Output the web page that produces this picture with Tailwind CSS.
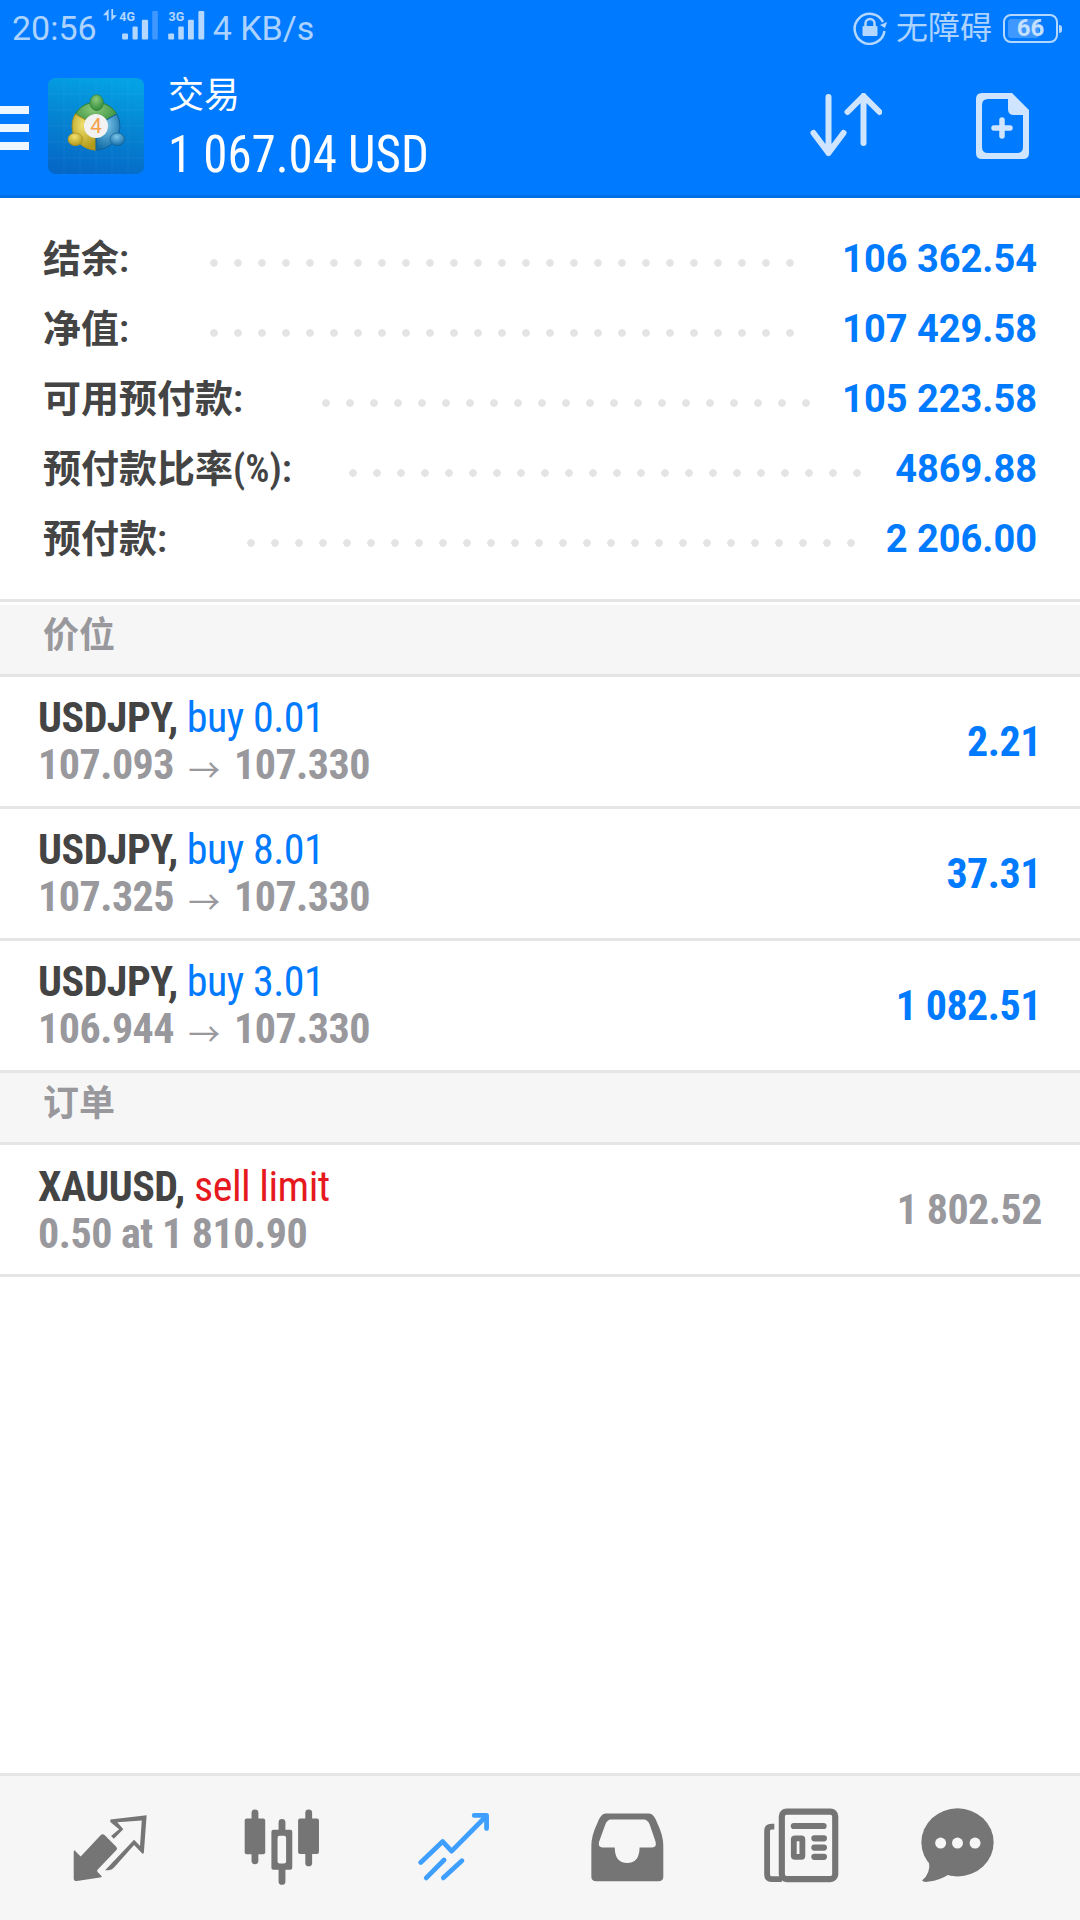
<!DOCTYPE html>
<html lang="en">
<head>
    <meta charset="UTF-8">
    <meta name="viewport" content="width=device-width, initial-scale=1.0">
    <title>交易</title>
    <script src="https://cdn.jsdelivr.net/npm/@tailwindcss/browser@4"></script>
</head>
<body class="bg-white w-[1080px] h-[1920px] overflow-hidden flex flex-col font-['Roboto','Noto_Sans_CJK_SC',sans-serif]">
    <!-- status bar -->
    <div class="h-[60px] pb-[4px] bg-[#007aff] flex items-center text-[#acd2ff] relative">
        <span class="ml-[12px] text-[34px] leading-none">20:56</span>
        <svg class="ml-[5px] w-[104px] h-[48px]" viewBox="297 20 300 138" fill="#b4d7ff">
            <path d="M300 52L316 34V68H311V52ZM340 52L324 68V34H329V52Z"/>
            <text x="347" y="70" font-size="36" font-weight="700" font-family="Roboto">4G</text>
            <rect x="355" y="105" width="17" height="17" rx="3"/><rect x="385" y="85" width="15" height="37" rx="3"/><rect x="412" y="65" width="18" height="57" rx="3"/><rect x="442" y="40" width="16" height="82" rx="3" fill="#3f98ff"/>
            <text x="489" y="68" font-size="36" font-weight="700" font-family="Roboto">3G</text>
            <rect x="488" y="105" width="17" height="17" rx="3"/><rect x="517" y="85" width="16" height="37" rx="3"/><rect x="545" y="65" width="17" height="57" rx="3"/><rect x="575" y="40" width="17" height="82" rx="3"/>
        </svg>
        <span class="ml-[7px] text-[34px] leading-none">4 KB/s</span>
        <svg class="ml-auto w-[34px] h-[34px]" viewBox="0 0 34 34" fill="none">
            <path d="M30 11A15 15 0 1 0 31.500 20" stroke="#b4d7ff" stroke-width="2.500"/>
            <path d="M27 14l5 3 2-6z" fill="#b4d7ff"/>
            <rect x="9.500" y="15" width="15" height="10" rx="1" fill="#b4d7ff"/>
            <path d="M12.500 15v-2.500a4.500 4.500 0 0 1 9 0V15" stroke="#b4d7ff" stroke-width="2.500"/>
        </svg>
        <span class="ml-[9px] text-[32px] leading-none">无障碍</span>
        <div class="ml-[11px] mr-[22px] w-[55px] h-[29px] border-2 border-[#b4d7ff] rounded-[8px] relative flex items-center justify-center p-[3px]">
            <div class="absolute left-[3px] top-[3px] bottom-[3px] w-[31px] bg-[#3f98ff] rounded-[3px]"></div>
            <span class="relative text-[24px] font-bold leading-none text-[#c4e0ff]">66</span>
            <div class="absolute right-[-6px] top-[9px] w-[3px] h-[8px] bg-[#b4d7ff] rounded-r-sm"></div>
        </div>
    </div>

    <!-- toolbar -->
    <div class="h-[138px] bg-[#007aff] border-b-[3px] border-[#006fe6] flex items-start">
        <div class="mt-[46px] w-[29px] flex flex-col gap-[10px]">
            <div class="h-[8px] bg-[#eef6ff]"></div>
            <div class="h-[8px] bg-[#eef6ff]"></div>
            <div class="h-[8px] bg-[#eef6ff]"></div>
        </div>
        <svg class="ml-[19px] mt-[18px] w-[96px] h-[96px] shrink-0" viewBox="54 54 288 288">
            <defs>
                <linearGradient id="bg" x1="0.600" y1="0" x2="0.400" y2="1"><stop offset="0" stop-color="#04a2e4"/><stop offset="0.500" stop-color="#0583d2"/><stop offset="1" stop-color="#0568c6"/></linearGradient>
                <radialGradient id="gr" cx="0.450" cy="0.300" r="0.700"><stop offset="0" stop-color="#8cc97a"/><stop offset="1" stop-color="#2f8a3a"/></radialGradient>
                <radialGradient id="ye" cx="0.450" cy="0.300" r="0.700"><stop offset="0" stop-color="#f0e070"/><stop offset="1" stop-color="#b29a18"/></radialGradient>
                <radialGradient id="bl" cx="0.450" cy="0.300" r="0.700"><stop offset="0" stop-color="#7cc4e8"/><stop offset="1" stop-color="#136fa8"/></radialGradient>
            </defs>
            <rect x="54" y="54" width="288" height="288" rx="22" fill="url(#bg)"/>
            <path d="M102 54v288M150 54v288M198 54v288M246 54v288M294 54v288M54 102h288M54 150h288M54 198h288M54 246h288M54 294h288" stroke="#ffffff" stroke-opacity="0.080" stroke-width="2"/>
            <path d="M198 198L136 162A72 72 0 0 1 260 162Z" fill="url(#gr)" stroke="#2f7f38" stroke-width="3"/>
            <path d="M198 198L136 162A72 72 0 0 0 198 270Z" fill="url(#ye)" stroke="#a8901a" stroke-width="3"/>
            <path d="M198 198L260 162A72 72 0 0 1 198 270Z" fill="url(#bl)" stroke="#0f5f9a" stroke-width="3"/>
            <ellipse cx="200" cy="128" rx="20" ry="24" fill="url(#gr)" stroke="#2f7f38" stroke-width="2"/>
            <ellipse cx="136" cy="238" rx="22" ry="19" fill="url(#ye)" stroke="#a8901a" stroke-width="2"/>
            <ellipse cx="262" cy="238" rx="22" ry="19" fill="url(#bl)" stroke="#135f90" stroke-width="2"/>
            <circle cx="198" cy="198" r="36" fill="#f2f2f2"/>
            <text x="198" y="220" font-size="62" text-anchor="middle" font-family="Roboto" fill="#f5a04a">4</text>
        </svg>
        <div class="ml-[24px] flex flex-col text-white">
            <span class="mt-[14px] text-[36px] leading-[44px]">交易</span>
            <span class="mt-[8px] text-[52px] leading-[58px] [font-stretch:75%] origin-left scale-x-[0.94] whitespace-nowrap">1 067.04 USD</span>
        </div>
        <svg class="ml-auto mt-[33px] w-[73px] h-[66px]" viewBox="0 0 72 66" fill="none" stroke="#cfe5ff" stroke-width="6" stroke-linecap="round" stroke-linejoin="round">
            <path d="M19 4V60M4 40L19 60L34 40"/>
            <path d="M54 3V50M38 19L54 3L70 19"/>
        </svg>
        <svg class="ml-[93px] mr-[50px] mt-[33px] w-[55px] h-[66px]" viewBox="0 0 53 66">
            <path fill-rule="evenodd" fill="#cfe5ff" d="M6 0H36L53 17V60Q53 66 47 66H6Q0 66 0 60V6Q0 0 6 0ZM12 6Q6 6 6 12V54Q6 60 12 60H41Q47 60 47 54V22H38Q32 22 32 16V6Z"/>
            <path d="M26 27V43M18 35H34" stroke="#cfe5ff" stroke-width="5.500" stroke-linecap="round"/>
        </svg>
    </div>

    <!-- account summary -->
    <div class="pt-[26px] pb-[25px] pl-[43px] pr-[43px] text-[38px] leading-[70px]">
        <div class="flex items-center h-[70px]">
            <span class="w-[159px] font-semibold text-[#444444] whitespace-nowrap">结余:</span>
            <div class="w-[600px] h-[24px] mt-[8px] bg-[radial-gradient(circle,#e4e4e4_3.5px,transparent_4px)] bg-[length:24px_24px]"></div>
            <span class="ml-auto font-bold text-[#007aff]">106 362.54</span>
        </div>
        <div class="flex items-center h-[70px]">
            <span class="w-[159px] font-semibold text-[#444444] whitespace-nowrap">净值:</span>
            <div class="w-[600px] h-[24px] mt-[8px] bg-[radial-gradient(circle,#e4e4e4_3.5px,transparent_4px)] bg-[length:24px_24px]"></div>
            <span class="ml-auto font-bold text-[#007aff]">107 429.58</span>
        </div>
        <div class="flex items-center h-[70px]">
            <span class="w-[271px] font-semibold text-[#444444] whitespace-nowrap">可用预付款:</span>
            <div class="w-[504px] h-[24px] mt-[8px] bg-[radial-gradient(circle,#e4e4e4_3.5px,transparent_4px)] bg-[length:24px_24px]"></div>
            <span class="ml-auto font-bold text-[#007aff]">105 223.58</span>
        </div>
        <div class="flex items-center h-[70px]">
            <span class="w-[298px] font-semibold text-[#444444] whitespace-nowrap">预付款比率<span class="[font-stretch:75%]">(%):</span></span>
            <div class="w-[528px] h-[24px] mt-[8px] bg-[radial-gradient(circle,#e4e4e4_3.5px,transparent_4px)] bg-[length:24px_24px]"></div>
            <span class="ml-auto font-bold text-[#007aff]">4869.88</span>
        </div>
        <div class="flex items-center h-[70px]">
            <span class="w-[196px] font-semibold text-[#444444] whitespace-nowrap">预付款:</span>
            <div class="w-[624px] h-[24px] mt-[8px] bg-[radial-gradient(circle,#e4e4e4_3.5px,transparent_4px)] bg-[length:24px_24px]"></div>
            <span class="ml-auto font-bold text-[#007aff]">2 206.00</span>
        </div>
    </div>

    <!-- positions -->
    <div class="h-[3px] bg-[#e5e5e5]"></div>
    <div class="h-[3px]"></div>
    <div class="h-[72px] bg-[#f6f6f6] border-b-[3px] border-[#e5e5e5] pl-[43px] text-[36px] leading-[62px] font-semibold text-[#98989d]">价位</div>

    <div class="h-[132px] border-b-[3px] border-[#e5e5e5] pl-[38px] pr-[39px] flex items-center justify-between [font-stretch:75%] tracking-[-0.5px]">
        <div class="mt-[3px] whitespace-nowrap">
            <div class="text-[42px] leading-[47px] font-bold text-[#444444]">USDJPY, <span class="font-normal text-[#007aff]">buy 0.01</span></div>
            <div class="text-[42px] leading-[47px] font-bold text-[#98989d]">107.093 <span class="inline-block mx-[5px] text-[32px] font-normal translate-y-[3px]">→</span> 107.330</div>
        </div>
        <div class="text-[42px] font-bold text-[#007aff]">2.21</div>
    </div>
    <div class="h-[132px] border-b-[3px] border-[#e5e5e5] pl-[38px] pr-[39px] flex items-center justify-between [font-stretch:75%] tracking-[-0.5px]">
        <div class="mt-[3px] whitespace-nowrap">
            <div class="text-[42px] leading-[47px] font-bold text-[#444444]">USDJPY, <span class="font-normal text-[#007aff]">buy 8.01</span></div>
            <div class="text-[42px] leading-[47px] font-bold text-[#98989d]">107.325 <span class="inline-block mx-[5px] text-[32px] font-normal translate-y-[3px]">→</span> 107.330</div>
        </div>
        <div class="text-[42px] font-bold text-[#007aff]">37.31</div>
    </div>
    <div class="h-[132px] border-b-[3px] border-[#e5e5e5] pl-[38px] pr-[39px] flex items-center justify-between [font-stretch:75%] tracking-[-0.5px]">
        <div class="mt-[3px] whitespace-nowrap">
            <div class="text-[42px] leading-[47px] font-bold text-[#444444]">USDJPY, <span class="font-normal text-[#007aff]">buy 3.01</span></div>
            <div class="text-[42px] leading-[47px] font-bold text-[#98989d]">106.944 <span class="inline-block mx-[5px] text-[32px] font-normal translate-y-[3px]">→</span> 107.330</div>
        </div>
        <div class="text-[42px] font-bold text-[#007aff]">1 082.51</div>
    </div>

    <!-- orders -->
    <div class="h-[72px] bg-[#f6f6f6] border-b-[3px] border-[#e5e5e5] pl-[43px] text-[36px] leading-[62px] font-semibold text-[#98989d]">订单</div>
    <div class="h-[132px] border-b-[3px] border-[#e5e5e5] pl-[38px] pr-[38px] flex items-center justify-between [font-stretch:75%] tracking-[-0.5px]">
        <div class="whitespace-nowrap">
            <div class="text-[42px] leading-[47px] font-bold text-[#444444]">XAUUSD, <span class="font-normal text-[#e5191e]">sell limit</span></div>
            <div class="text-[42px] leading-[47px] font-bold text-[#98989d]">0.50 at 1 810.90</div>
        </div>
        <div class="text-[42px] font-bold text-[#98989d]">1 802.52</div>
    </div>

    <!-- bottom nav -->
    <div class="mt-auto h-[147px] bg-[#f6f6f6] border-t-[3px] border-[#e5e5e5] flex items-start pl-[73px]">
        <svg class="mt-[39px] w-[74px] h-[67px]" viewBox="213 164 212 192" fill="#757575">
            <path d="M215 270Q216 262 222 270L235 283L292 222Q298 216 304 222L336 254Q342 260 336 266L284 320Q280 324 284 328L294 338Q298 342 290 343L224 353Q215 354 215 345Z"/>
            <path d="M320 177L424 165L416 272Q414 277 410 273L388 250L330 315Q324 322 315 322H305L388 235L405 253L410 180L340 185L357 205L330 232L322 224L345 205L320 184Z"/>
        </svg>
        <svg class="ml-[97px] mt-[33px] w-[76px] h-[77px]" viewBox="707 147 222 224" fill="#757575">
            <rect x="709" y="174" width="60" height="105" rx="6"/><rect x="729" y="148" width="20" height="160" rx="10"/>
            <rect x="865" y="174" width="61" height="104" rx="6"/><rect x="886" y="148" width="20" height="166" rx="10"/>
            <path fill-rule="evenodd" d="M793 207H808V186Q808 176 818 176Q828 176 828 186V207H842Q848 207 848 213V318Q848 324 842 324H828V358Q828 368 818 368Q808 368 808 358V324H793Q787 324 787 318V213Q787 207 793 207ZM811 225Q805 225 805 231V300Q805 306 811 306H824Q830 306 830 300V231Q830 225 824 225Z"/>
        </svg>
        <svg class="ml-[98px] mt-[36px] w-[72px] h-[70px]" viewBox="1212 154 210 204" fill="none" stroke="#3f9fff" stroke-width="14" stroke-linecap="round" stroke-linejoin="round">
            <path d="M1220 301L1284 240L1310 268L1405 172"/>
            <path d="M1376 164H1412V202"/>
            <path d="M1236 346L1288 294M1286 346L1340 296"/>
        </svg>
        <svg class="ml-[101px] mt-[37px] w-[73px] h-[69px]" viewBox="147 155 212 200" fill="#757575">
            <path fill-rule="evenodd" d="M190 156H315Q330 156 340 185Q357 220 357 250V340Q357 353 343 353H162Q148 353 148 340V250Q148 220 165 185Q175 156 190 156ZM205 174Q194 174 188 190L170 240Q168 255 180 255H216Q216 300 252 300Q288 300 288 255H325Q337 255 335 240L318 190Q312 174 300 174Z"/>
        </svg>
        <svg class="ml-[99px] mt-[32px] w-[76px] h-[75px]" viewBox="645 146 222 218" fill="none" stroke="#757575">
            <rect x="700" y="156" width="156" height="197" rx="14" stroke-width="18"/>
            <path d="M678 200H670Q657 200 657 213V340Q657 353 670 353H700" stroke-width="17"/>
            <path d="M735 198H822M795 234H823M795 261H823M795 288H823" stroke-width="18" stroke-linecap="round"/>
            <rect x="735" y="234" width="25" height="54" rx="3" stroke-width="17"/>
        </svg>
        <svg class="ml-[82px] mt-[32px] w-[73px] h-[75px]" viewBox="1107 146 212 218">
            <ellipse cx="1213" cy="246" rx="105" ry="99" fill="#757575"/>
            <path d="M1130 300Q1136 335 1110 357Q1115 363 1130 360Q1160 357 1190 338Z" fill="#757575"/>
            <circle cx="1164" cy="248" r="16" fill="#f6f6f6"/><circle cx="1213" cy="248" r="16" fill="#f6f6f6"/><circle cx="1264" cy="248" r="16" fill="#f6f6f6"/>
        </svg>
    </div>
</body>
</html>
